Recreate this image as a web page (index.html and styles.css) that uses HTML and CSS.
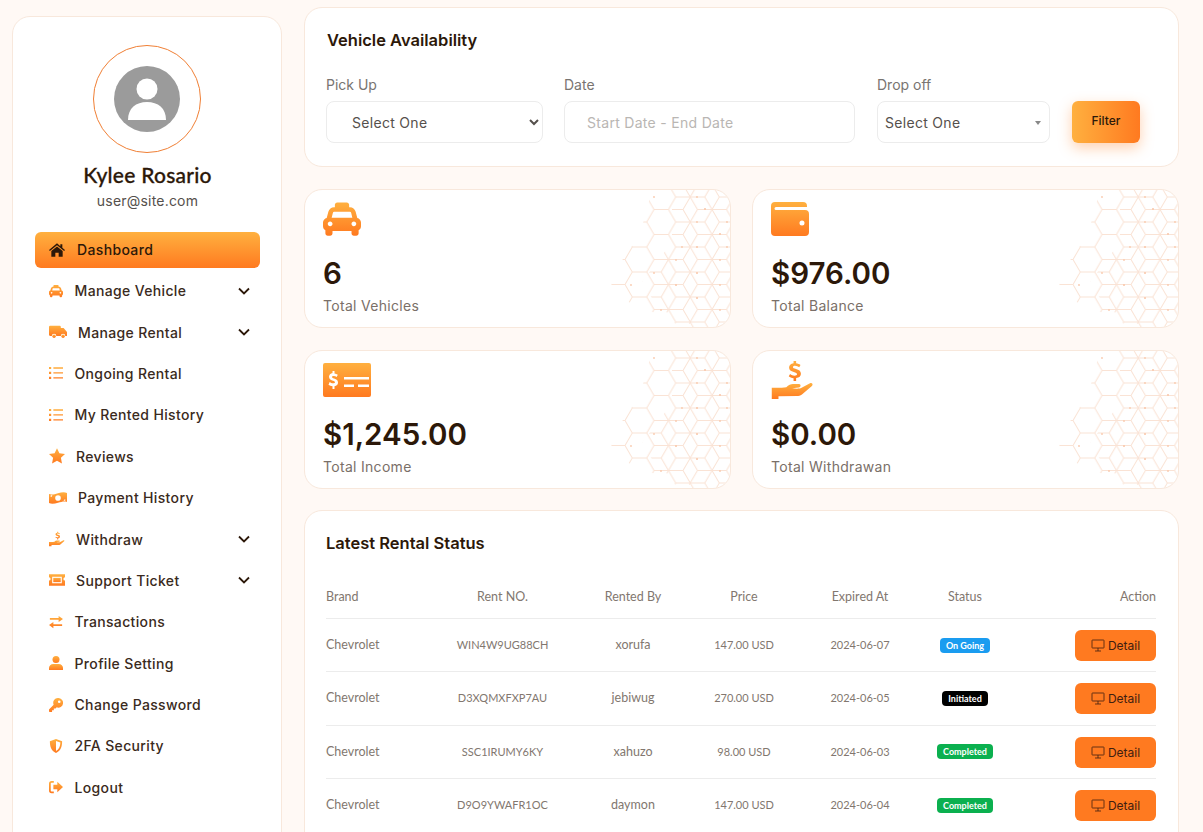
FILE: index.html
```html
<!DOCTYPE html>
<html lang="en">
<head>
    <meta charset="UTF-8">
    <meta name="viewport" content="width=device-width, initial-scale=1.0">
    <title>Dashboard</title>
    <link rel="stylesheet" href="styles.css">
</head>
<body>

    <!-- Shared gradient, icons and card background -->
    <svg class="defs" width="0" height="0" aria-hidden="true">
        <defs>
            <linearGradient id="ora" x1="0" y1="0" x2="0" y2="1">
                <stop offset="0" stop-color="#ffb03f"/>
                <stop offset="1" stop-color="#ff7a20"/>
            </linearGradient>
            <pattern id="hexa" width="43.5" height="25" patternUnits="userSpaceOnUse" patternTransform="translate(15 7)">
                <path d="M0 12.5L7.25 0H21.75L29 12.5L21.75 25H7.25ZM29 12.5H43.5" fill="none" stroke="#fae3d5" stroke-width="1"/>
            </pattern>
            <pattern id="hexb" width="43.5" height="25" patternUnits="userSpaceOnUse" patternTransform="translate(29.5 7)">
                <path d="M0 12.5L7.25 0H21.75L29 12.5L21.75 25H7.25ZM29 12.5H43.5" fill="none" stroke="#fae3d5" stroke-width="1"/>
            </pattern>
            <clipPath id="hexclip">
                <polygon points="42,0 120,0 120,139 75,139 52,126 4,106 0,88 30,44"/>
            </clipPath>
            <clipPath id="hexclip2">
                <polygon points="62,0 120,0 120,139 90,139 48,118 32,92 62,52"/>
            </clipPath>
        </defs>
        <symbol id="hexbg" viewBox="0 0 120 139">
            <rect width="120" height="139" fill="url(#hexa)" clip-path="url(#hexclip)"/>
            <rect width="120" height="139" fill="url(#hexb)" clip-path="url(#hexclip2)"/>
            <g fill="#f9c9ad">
                <circle cx="44" cy="7" r=".9"/><circle cx="87" cy="7" r=".9"/><circle cx="95" cy="19" r="1.1"/>
                <circle cx="87" cy="32" r=".9"/><circle cx="117" cy="32" r=".9"/><circle cx="110" cy="44" r="1.1"/>
                <circle cx="72" cy="57" r=".9"/><circle cx="87" cy="57" r="1.1"/><circle cx="117" cy="57" r=".9"/>
                <circle cx="66" cy="70" r=".9"/><circle cx="110" cy="70" r=".9"/><circle cx="44" cy="83" r=".9"/>
                <circle cx="87" cy="83" r="1.1"/><circle cx="21" cy="95" r=".9"/><circle cx="66" cy="95" r="1.1"/>
                <circle cx="110" cy="95" r=".9"/><circle cx="87" cy="108" r="1.1"/><circle cx="51" cy="120" r=".9"/>
                <circle cx="110" cy="120" r=".9"/>
            </g>
        </symbol>
        <symbol id="i-taxi" viewBox="0 32 512 448">
            <path d="M462 241.64l-22-84.11c-9.6-35.2-41.6-60.8-76.8-60.8H352V64c0-17.67-14.33-32-32-32H192c-17.67 0-32 14.33-32 32v32.73h-11.2c-35.2 0-67.2 25.6-76.8 60.8l-22 84.11C21.41 248.04 0 273.47 0 304v48c0 23.63 12.95 44.04 32 55.12V448c0 17.67 14.33 32 32 32h32c17.67 0 32-14.33 32-32v-32h256v32c0 17.67 14.33 32 32 32h32c17.67 0 32-14.33 32-32v-40.88c19.05-11.09 32-31.5 32-55.12v-48c0-30.53-21.41-55.96-50-62.36zM96 352c-17.67 0-32-14.33-32-32s14.33-32 32-32 32 14.33 32 32-14.33 32-32 32zm20.55-112l17.2-68.29c1.78-7.11 8.17-12.11 15.5-12.11h214.34c7.33 0 13.72 5 15.5 12.11L395.45 240H116.55zM416 352c-17.67 0-32-14.33-32-32s14.33-32 32-32 32 14.33 32 32-14.33 32-32 32z"/>
        </symbol>
        <symbol id="i-home" viewBox="0 0 24 20">
            <path d="M12 0L0 10l1.3 1.6L12 2.8l10.7 8.8L24 10l-4-3.3V1.5h-3v2.7z"/>
            <path d="M12 4.6L3.5 11.6V20h6v-6h5v6h6v-8.400z"/>
        </symbol>
        <symbol id="i-truck" viewBox="0 0 32 22">
            <path d="M2 0h17a2 2 0 0 1 2 2v2h5l6 7v7h-3a4 4 0 0 0-8 0h-8a4 4 0 0 0-8 0H2a2 2 0 0 1-2-2V2a2 2 0 0 1 2-2z"/>
            <circle cx="9" cy="18.500" r="3"/><circle cx="25" cy="18.500" r="3"/>
        </symbol>
        <symbol id="i-list" viewBox="0 0 16 14">
            <path d="M0 0h2.500v2.500H0zM0 5.700h2.500v2.500H0zM0 11.400h2.500v2.500H0zM5 .5h11v1.500H5zM5 6.200h11v1.500H5zM5 11.900h11v1.500H5z"/>
        </symbol>
        <symbol id="i-star" viewBox="0 0 24 23">
            <path d="M12 0l3.600 7.500 8.400 1.100-6.100 5.700 1.500 8.300L12 18.600l-7.400 4 1.500-8.300L0 8.600l8.400-1.100z"/>
        </symbol>
        <symbol id="i-money" viewBox="0 0 32 20">
            <path fill-rule="evenodd" d="M0 3c5 2 10 0 16-1.500S27-1 32 1v16c-5-2-10 0-16 1.500S5 21 0 19zM16 5a5 5 0 1 0 0 10 5 5 0 0 0 0-10zM3 5v3a3 3 0 0 0 3-3zM29 15v-3a3 3 0 0 0-3 3z"/>
        </symbol>
        <symbol id="i-hand" viewBox="0 0 38 34">
            <path d="M13 23.500c2-2.500 4-3 6-3h5.500c1.500 0 2 2.800-.3 3.200l-6 .6c3 .6 6.500.7 8.500-.3l7.500-4c1.700-.9 3.200 1 1.700 2.400L27 30c-1.500 1-3 1.300-4.500 1.300L6 31.500V34H0V24h9z"/>
            <path fill-rule="evenodd" d="M19.500 0h2.300v2c1.600.2 2.900.8 3.900 1.500l-1.100 2c-1-.6-2.300-1.300-3.700-1.300-1.300 0-2 .5-2 1.200 0 .9 1 1.200 2.800 1.800 2.500.7 4.400 1.700 4.400 4.200 0 2.100-1.500 3.500-4.300 3.900V18h-2.300v-2.600c-1.800-.2-3.300-1-4.300-1.800l1.200-2c1.100.8 2.600 1.500 3.900 1.500 1.500 0 2.300-.5 2.300-1.300 0-.9-1.100-1.300-2.900-1.900-2.500-.7-4.200-1.700-4.200-4 0-2 1.400-3.400 4-3.800z"/>
        </symbol>
        <symbol id="i-ticket" viewBox="0 0 30 22">
            <path fill-rule="evenodd" d="M0 0h30v6a3 3 0 0 0 0 6v10H0v-10a3 3 0 0 0 0-6zM6 5v12h18V5z"/>
            <path d="M8 7h14v8H8z"/>
        </symbol>
        <symbol id="i-swap" viewBox="0 0 16 14">
            <path d="M11 0l5 3.500L11 7V4.500H1v-2h10zM5 7v2.500h10v2H5V14L0 10.500z"/>
        </symbol>
        <symbol id="i-user" viewBox="0 0 16 16">
            <circle cx="8" cy="4" r="4"/><path d="M0 16v-2.500C0 11 2 9 5 9h6c3 0 5 2 5 4.500V16z"/>
        </symbol>
        <symbol id="i-key" viewBox="0 0 16 16">
            <path fill-rule="evenodd" d="M10.500 0a5.500 5.500 0 1 1-1.700 10.700L7.500 12H5.500v2h-2v2H.8a.8.8 0 0 1-.8-.8V13l5.300-5.300A5.500 5.500 0 0 1 10.500 0zm1.200 2.800a1.500 1.500 0 1 0 0 3 1.500 1.500 0 0 0 0-3z"/>
        </symbol>
        <symbol id="i-shield" viewBox="0 0 14 16">
            <path fill-rule="evenodd" d="M7 0l7 2.600c0 6-1.500 10.800-7 13.400C1.500 13.400 0 8.600 0 2.600zM7 2.400v11.300c3.700-2 4.800-5.500 5-9.700z"/>
        </symbol>
        <symbol id="i-logout" viewBox="0 0 16 14">
            <path d="M5.500 0v2H3a1 1 0 0 0-1 1v8a1 1 0 0 0 1 1h2.500v2H3a3 3 0 0 1-3-3V3a3 3 0 0 1 3-3z"/>
            <path d="M9.500 1L16 7l-6.500 6V9.500H5v-5h4.500z"/>
        </symbol>
        <symbol id="i-wallet" viewBox="0 0 38 34">
            <path fill-rule="evenodd" d="M4 0h28a4 4 0 0 1 4 4v1H5a1.500 1.500 0 0 0 0 3h29a4 4 0 0 1 4 4v18a4 4 0 0 1-4 4H4a4 4 0 0 1-4-4V4a4 4 0 0 1 4-4zm27 18.500a2.500 2.500 0 1 0 0 5 2.500 2.500 0 0 0 0-5z"/>
        </symbol>
        <symbol id="i-cash" viewBox="0 0 48 34">
            <path fill-rule="evenodd" d="M2 0h44a2 2 0 0 1 2 2v30a2 2 0 0 1-2 2H2a2 2 0 0 1-2-2V2a2 2 0 0 1 2-2zM9.500 8v2C7.500 10.500 6 11.800 6 13.800c0 2.500 2.200 3.300 4 3.900 1.300.4 2 .8 2 1.500s-.8 1.100-1.900 1.100c-1.200 0-2.400-.6-3.400-1.300L5.500 21.700c1 .8 2.400 1.300 4 1.500V26h2v-2.800c2.200-.4 3.500-1.800 3.500-3.800 0-2.600-2.200-3.400-4-4-1.300-.4-2-.8-2-1.500 0-.7.700-1 1.700-1 1.100 0 2.100.4 3 1l1.100-2.100c-.9-.6-2.100-1.100-3.300-1.300V8zM21 14v2.500h25V14zM21 21.500V24h10v-2.500zM35 21.500V24h11v-2.500z"/>
        </symbol>
        <symbol id="i-chev" viewBox="0 0 12 8">
            <path d="M1 1.500l5 5 5-5" fill="none" stroke="currentColor" stroke-width="1.800"/>
        </symbol>
        <symbol id="i-desk" viewBox="0 0 14 13">
            <path d="M1.500 1h11a.5.5 0 0 1 .5.5v7a.5.5 0 0 1-.5.5h-11a.5.5 0 0 1-.5-.5v-7a.5.5 0 0 1 .5-.5zM7 9v3M4 12h6" fill="none" stroke="currentColor" stroke-width=".8"/>
        </symbol>
    </svg>

    <div class="page">

        <aside class="sidebar">
            <div class="avatar-ring">
                <svg class="avatar" viewBox="0 0 66 66">
                    <circle cx="33" cy="33" r="33" fill="#9b9b9b"/>
                    <circle cx="33" cy="23" r="10.500" fill="#fff"/>
                    <path d="M14 54c0-12 8-18 19-18s19 6 19 18z" fill="#fff"/>
                </svg>
            </div>
            <h4 class="user-name">Kylee Rosario</h4>
            <p class="user-mail">user@site.com</p>

            <nav class="menu">
                <a class="menu-item active"><svg class="mi home"><use href="#i-home"/></svg>Dashboard</a>
                <a class="menu-item"><svg class="mi" fill="url(#ora)"><use href="#i-taxi"/></svg>Manage Vehicle<svg class="chev"><use href="#i-chev"/></svg></a>
                <a class="menu-item"><svg class="mi wide" fill="url(#ora)"><use href="#i-truck"/></svg>Manage Rental<svg class="chev"><use href="#i-chev"/></svg></a>
                <a class="menu-item"><svg class="mi" fill="url(#ora)"><use href="#i-list"/></svg>Ongoing Rental</a>
                <a class="menu-item"><svg class="mi" fill="url(#ora)"><use href="#i-list"/></svg>My Rented History</a>
                <a class="menu-item"><svg class="mi mid" fill="url(#ora)"><use href="#i-star"/></svg>Reviews</a>
                <a class="menu-item"><svg class="mi wide" fill="url(#ora)"><use href="#i-money"/></svg>Payment History</a>
                <a class="menu-item"><svg class="mi mid" fill="url(#ora)"><use href="#i-hand"/></svg>Withdraw<svg class="chev"><use href="#i-chev"/></svg></a>
                <a class="menu-item"><svg class="mi mid" fill="url(#ora)"><use href="#i-ticket"/></svg>Support Ticket<svg class="chev"><use href="#i-chev"/></svg></a>
                <a class="menu-item"><svg class="mi" fill="url(#ora)"><use href="#i-swap"/></svg>Transactions</a>
                <a class="menu-item"><svg class="mi" fill="url(#ora)"><use href="#i-user"/></svg>Profile Setting</a>
                <a class="menu-item"><svg class="mi" fill="url(#ora)"><use href="#i-key"/></svg>Change Password</a>
                <a class="menu-item"><svg class="mi" fill="url(#ora)"><use href="#i-shield"/></svg>2FA Security</a>
                <a class="menu-item"><svg class="mi" fill="url(#ora)"><use href="#i-logout"/></svg>Logout</a>
            </nav>
        </aside>

        <main class="content">

            <section class="card search-card">
                <h5 class="card-title">Vehicle Availability</h5>
                <form class="search-form">
                    <div class="field">
                        <label for="pickup">Pick Up</label>
                        <select id="pickup" class="control native"><option>Select One</option></select>
                    </div>
                    <div class="field">
                        <label for="dates">Date</label>
                        <input id="dates" class="control date" type="text" placeholder="Start Date - End Date">
                    </div>
                    <div class="field">
                        <label>Drop off</label>
                        <div class="control fake-select">Select One<span class="caret"></span></div>
                    </div>
                    <button class="btn-filter" type="button">Filter</button>
                </form>
            </section>

            <section class="stats">
                <div class="stat">
                    <svg class="hexbg"><use href="#hexbg"/></svg>
                    <svg class="stat-icon" fill="url(#ora)"><use href="#i-taxi"/></svg>
                    <h3 class="stat-value">6</h3>
                    <p class="stat-label">Total Vehicles</p>
                </div>
                <div class="stat">
                    <svg class="hexbg"><use href="#hexbg"/></svg>
                    <svg class="stat-icon" fill="url(#ora)"><use href="#i-wallet"/></svg>
                    <h3 class="stat-value">$976.00</h3>
                    <p class="stat-label">Total Balance</p>
                </div>
                <div class="stat">
                    <svg class="hexbg"><use href="#hexbg"/></svg>
                    <svg class="stat-icon cash" fill="url(#ora)"><use href="#i-cash"/></svg>
                    <h3 class="stat-value">$1,245.00</h3>
                    <p class="stat-label">Total Income</p>
                </div>
                <div class="stat">
                    <svg class="hexbg"><use href="#hexbg"/></svg>
                    <svg class="stat-icon hand" fill="url(#ora)"><use href="#i-hand"/></svg>
                    <h3 class="stat-value">$0.00</h3>
                    <p class="stat-label">Total Withdrawan</p>
                </div>
            </section>

            <section class="card table-card">
                <h5 class="card-title">Latest Rental Status</h5>
                <table class="rentals">
                    <thead>
                        <tr>
                            <th class="c-brand">Brand</th>
                            <th class="c-no">Rent NO.</th>
                            <th class="c-by">Rented By</th>
                            <th class="c-price">Price</th>
                            <th class="c-exp">Expired At</th>
                            <th class="c-status">Status</th>
                            <th class="c-action">Action</th>
                        </tr>
                    </thead>
                    <tbody>
                        <tr>
                            <td class="c-brand">Chevrolet</td>
                            <td class="num">WIN4W9UG88CH</td>
                            <td>xorufa</td>
                            <td class="num">147.00 USD</td>
                            <td class="num">2024-06-07</td>
                            <td><span class="badge going">On Going</span></td>
                            <td class="c-action"><a class="btn-detail"><svg class="desk"><use href="#i-desk"/></svg>Detail</a></td>
                        </tr>
                        <tr>
                            <td class="c-brand">Chevrolet</td>
                            <td class="num">D3XQMXFXP7AU</td>
                            <td>jebiwug</td>
                            <td class="num">270.00 USD</td>
                            <td class="num">2024-06-05</td>
                            <td><span class="badge initiated">Initiated</span></td>
                            <td class="c-action"><a class="btn-detail"><svg class="desk"><use href="#i-desk"/></svg>Detail</a></td>
                        </tr>
                        <tr>
                            <td class="c-brand">Chevrolet</td>
                            <td class="num">SSC1IRUMY6KY</td>
                            <td>xahuzo</td>
                            <td class="num">98.00 USD</td>
                            <td class="num">2024-06-03</td>
                            <td><span class="badge completed">Completed</span></td>
                            <td class="c-action"><a class="btn-detail"><svg class="desk"><use href="#i-desk"/></svg>Detail</a></td>
                        </tr>
                        <tr class="last-row">
                            <td class="c-brand">Chevrolet</td>
                            <td class="num">D9O9YWAFR1OC</td>
                            <td>daymon</td>
                            <td class="num">147.00 USD</td>
                            <td class="num">2024-06-04</td>
                            <td><span class="badge completed">Completed</span></td>
                            <td class="c-action"><a class="btn-detail"><svg class="desk"><use href="#i-desk"/></svg>Detail</a></td>
                        </tr>
                    </tbody>
                </table>
            </section>

        </main>
    </div>

</body>
</html>
```
FILE: styles.css
```css
/* Page */
html, body {
    height: 100%;
    overflow: hidden;
}

body {
    margin: 0;
    font-family: 'Inter', sans-serif;
    color: #2c1809;
    background: #fff9f5;
}

.defs {
    position: absolute;
}

.page {
    box-sizing: border-box;
    display: flex;
    align-items: flex-start;
    gap: 22px;
    height: 100vh;
    padding: 7px 24px 0 12px;
    overflow: hidden;
}

/* Sidebar */
.sidebar {
    flex: 0 0 270px;
    box-sizing: border-box;
    height: 860px;
    margin-top: 9px;
    padding: 28px 21px 0 22px;
    background: #fff;
    border: 1px solid #f8e8dc;
    border-radius: 18px;
    text-align: center;
}

.avatar-ring {
    box-sizing: border-box;
    width: 108px;
    height: 108px;
    margin-left: 58px;
    display: flex;
    align-items: center;
    justify-content: center;
    border: 1px solid #f07f35;
    border-radius: 50%;
}

.avatar {
    width: 66px;
    height: 66px;
}

.user-name {
    margin: 9px 0 0;
    font-family: 'Lato', sans-serif;
    font-size: 21px;
    line-height: 26px;
    font-weight: 500;
    letter-spacing: .25px;
    -webkit-text-stroke: .3px #2c1809;
}

.user-mail {
    margin: 3px 0 0;
    font-size: 14px;
    line-height: 20px;
    color: #55504c;
    letter-spacing: .2px;
}

/* Menu */
.menu {
    margin-top: 21px;
    text-align: left;
}

.menu-item {
    display: flex;
    align-items: center;
    height: 41.4px;
    padding-left: 14px;
    padding-right: 10px;
    font-size: 14px;
    font-weight: 500;
    letter-spacing: .35px;
    color: #3a2a20;
}

.menu-item.active {
    height: 36px;
    margin-bottom: 2px;
    padding-bottom: 1px;
    box-sizing: border-box;
    background: linear-gradient(to bottom, #ffb03f, #ff7a20);
    border-radius: 6px;
    color: #2c1809;
}

.mi {
    flex: none;
    width: 14px;
    height: 14px;
    margin-right: 11.5px;
}

.mi.mid {
    width: 16px;
    height: 16px;
    margin-right: 11px;
}

.mi.wide {
    width: 18px;
    height: 14px;
    margin-right: 11px;
}

.mi.home {
    width: 16px;
    height: 14px;
    margin-right: 12px;
    fill: #2c1809;
}

.chev {
    width: 12px;
    height: 8px;
    margin-left: auto;
    color: #2c1809;
}

/* Cards */
.content {
    flex: 0 0 875px;
    display: flex;
    flex-direction: column;
    gap: 22px;
}

.card {
    box-sizing: border-box;
    background: #fff;
    border: 1px solid #f8e8dc;
    border-radius: 18px;
    padding: 21px 22px 22px 21px;
}

.card-title {
    margin: 0;
    font-size: 16.5px;
    line-height: 22px;
    font-weight: 600;
}

/* Search form */
.search-card {
    height: 160px;
}

.search-card .card-title {
    margin-left: 1px;
}

.search-form {
    display: grid;
    grid-template-columns: 217px 292px 173px 69px;
    column-gap: 21px;
    align-items: end;
    margin-top: 24px;
}

.field label {
    display: block;
    margin-bottom: 6px;
    font-size: 14px;
    line-height: 20px;
    color: #787471;
}

.control {
    box-sizing: border-box;
    width: 100%;
    height: 42px;
    background: #fff;
    border: 1px solid #ececec;
    border-radius: 8px;
    font-family: 'Inter', sans-serif;
    font-size: 14px;
    letter-spacing: .3px;
    color: #55504c;
}

.control.native {
    padding-left: 21px;
}

.control.date {
    width: calc(100% - 1px);
    padding-left: 22px;
}

.control.date::placeholder {
    color: #b9b6b3;
}

.fake-select {
    position: relative;
    display: flex;
    align-items: center;
    padding-left: 7px;
}

.caret {
    position: absolute;
    right: 8px;
    top: 19px;
    border: 3px solid transparent;
    border-top: 4px solid #888;
    border-bottom: 0;
}

.btn-filter {
    height: 42px;
    margin-left: 1px;
    padding-bottom: 4px;
    background: linear-gradient(to right, #ffb03f, #ff7a20);
    border: none;
    border-radius: 6px;
    box-shadow: 0 5px 14px rgba(255, 122, 32, .35);
    font-family: 'Inter', sans-serif;
    font-size: 12px;
    font-weight: 500;
    color: #2c1809;
    cursor: pointer;
}

/* Stat boxes */
.stats {
    display: grid;
    grid-template-columns: 427px 427px;
    column-gap: 21px;
    row-gap: 22px;
}

.stat {
    position: relative;
    box-sizing: border-box;
    display: flex;
    flex-direction: column;
    align-items: flex-start;
    height: 139px;
    padding: 12px 18px 0;
    background: #fff;
    border: 1px solid #f8e8dc;
    border-radius: 18px;
    overflow: hidden;
}

.hexbg {
    position: absolute;
    top: 0;
    right: 0;
    width: 120px;
    height: 139px;
}

.stat-icon {
    flex: none;
    width: 38px;
    height: 34px;
    margin-bottom: 19px;
}

.stat-icon.cash {
    width: 48px;
}

.stat-icon.hand {
    width: 44px;
    height: 38px;
    margin-top: -2px;
    margin-bottom: 17px;
}

.stat-value {
    margin: 0;
    font-size: 29.5px;
    line-height: 36px;
    font-weight: 600;
}

.stat-label {
    margin: 5px 0 0;
    font-size: 14px;
    line-height: 20px;
    color: #7a6f68;
    letter-spacing: .3px;
}

/* Rentals table */
.table-card {
    height: 400px;
    margin-top: -1px;
}

.rentals {
    width: 830px;
    margin-top: 20px;
    border-collapse: collapse;
    table-layout: fixed;
    font-family: 'Lato', sans-serif;
    font-size: 12.5px;
    color: #82776f;
}

.rentals th {
    height: 44px;
    padding: 0;
    font-size: 12.500px;
    font-weight: 400;
    border-bottom: 1px solid #ececec;
}

.rentals td {
    height: 51.300px;
    padding: 0 0 1px;
    text-align: center;
    border-bottom: 1px solid #ececec;
}

.rentals .last-row td {
    border-bottom: none;
}

.rentals td.num {
    font-size: 11px;
}

.rentals .c-brand {
    width: 104px;
    text-align: left;
}

.c-no { width: 145px; }
.c-by { width: 116px; }
.c-price { width: 106px; }
.c-exp { width: 126px; }
.c-status { width: 84px; }

.rentals .c-action {
    text-align: right;
}

.rentals td.c-action {
    padding: 1px 0 0;
}

.badge {
    display: inline-block;
    padding: 0 6px;
    font-size: 9px;
    line-height: 15px;
    font-weight: 700;
    color: #fff;
    border-radius: 4px;
}

.badge.going { background: #1a9cf0; }
.badge.initiated { background: #000; }
.badge.completed { background: #0bb04f; }

.btn-detail {
    display: inline-flex;
    align-items: center;
    justify-content: center;
    gap: 3px;
    width: 81px;
    height: 31px;
    background: #ff7a20;
    border-radius: 6px;
    font-family: 'Inter', sans-serif;
    font-size: 12px;
    color: #3f2010;
}

.desk {
    width: 14px;
    height: 13px;
    color: #3f2010;
}
```
